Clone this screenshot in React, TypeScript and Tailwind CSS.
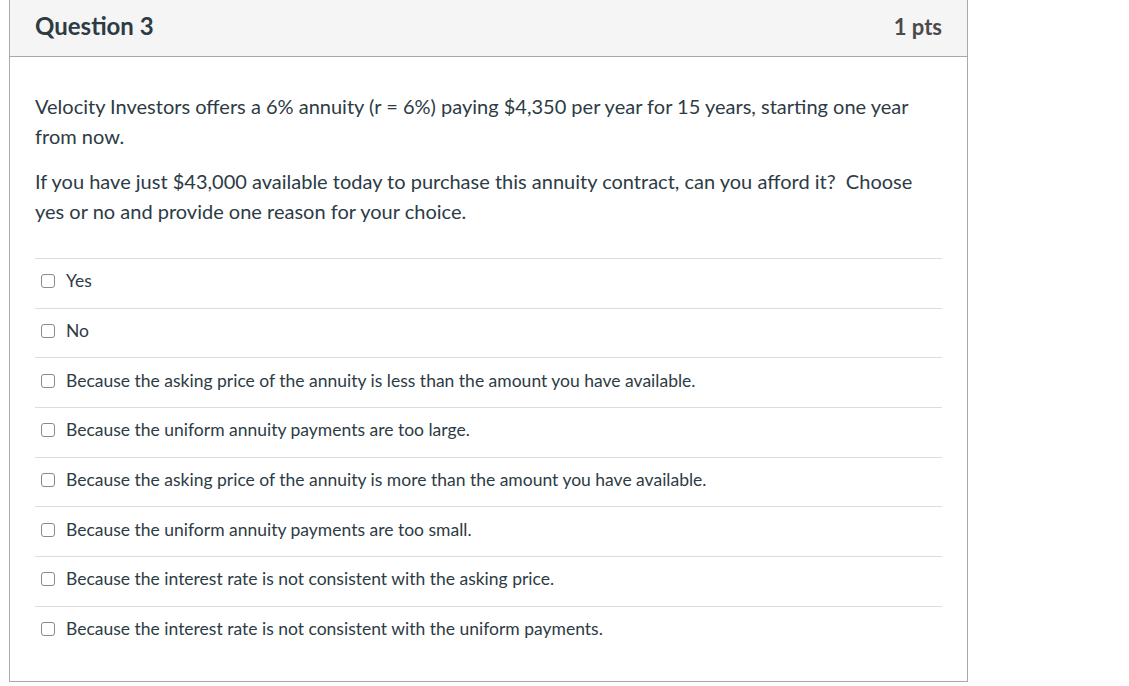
import React from 'react';

const answers = [
  'Yes',
  'No',
  'Because the asking price of the annuity is less than the amount you have available.',
  'Because the uniform annuity payments are too large.',
  'Because the asking price of the annuity is more than the amount you have available.',
  'Because the uniform annuity payments are too small.',
  'Because the interest rate is not consistent with the asking price.',
  'Because the interest rate is not consistent with the uniform payments.',
];

const App: React.FC = () => {
  return (
    <div className="min-h-screen bg-white pl-[9px] pr-[161px] text-[#2d3b45]" style={{ fontFamily: 'Lato, "Open Sans", sans-serif' }}>
      <div className="border-x border-b border-[#a8a8a8] h-[682px] flex flex-col">
        {/* Header */}
        <div className="h-[57px] bg-[#f5f5f5] border-b border-[#a8a8a8] flex items-center justify-between pl-[25px] pr-[25px] pb-[4px]">
          <h2 className="text-[24px] font-bold">Question 3</h2>
          <span className="text-[22px] font-bold text-[#4a4a4a]">1 pts</span>
        </div>

        {/* Body */}
        <div className="pl-[25px] pr-[25px] pt-[34px]">
          <p className="text-[20px] leading-[30px]">
            Velocity Investors offers a 6% annuity (r = 6%) paying $4,350 per year for 15 years, starting one year from now.
          </p>
          <p className="text-[20px] leading-[30px] mt-[15px]">
            If you have just $43,000 available today to purchase this annuity contract, can you afford it?&nbsp; Choose yes or no and provide one reason for your choice.
          </p>

          <div className="mt-[32px]">
            {answers.map((a) => (
              <label key={a} className="flex items-center h-[49.7px] border-t border-[#dcdcdc] pl-[6px] pb-[4px] text-[17.5px] cursor-pointer">
                <span className="w-[14px] h-[14px] border-[1.5px] border-[#8a8a8a] rounded-[3px] mr-[11px] shrink-0 bg-white" />
                <span>{a}</span>
              </label>
            ))}
          </div>
        </div>
      </div>
    </div>
  );
};

export default App;
